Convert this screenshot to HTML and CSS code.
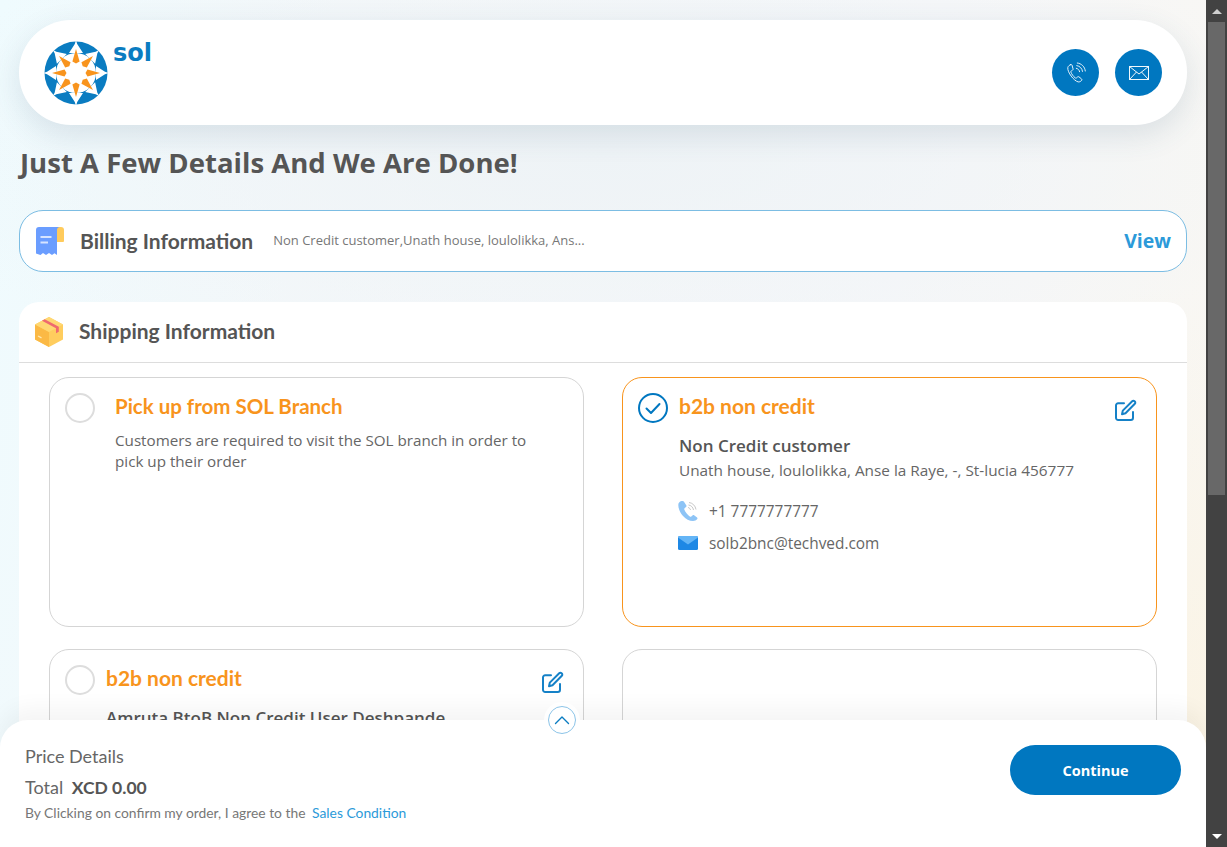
FILE: index.html
```html
<!DOCTYPE html>
<html lang="en">
<head>
<meta charset="utf-8">
<title>Checkout</title>
<link rel="stylesheet" href="styles.css">
</head>
<body>
<svg class="defs" width="0" height="0" aria-hidden="true">
  <symbol id="edit" viewBox="0 0 24 24">
    <path d="M11 4.2H5.2A2.2 2.2 0 0 0 3 6.4v12.4A2.2 2.2 0 0 0 5.2 21h12.6a2.2 2.2 0 0 0 2.2-2.2V13" fill="none" stroke="currentColor" stroke-width="2" stroke-linecap="round"/>
    <path d="M9 15.2l.8-3.6L19.2 2.2a1.6 1.6 0 0 1 2.3 0l.3.3a1.6 1.6 0 0 1 0 2.3L12.5 14.3z" fill="none" stroke="currentColor" stroke-width="2" stroke-linejoin="round"/>
  </symbol>
</svg>
<div class="page">
  <div class="content">
    <header class="topbar">
      <div class="brand">
        <svg class="logo" viewBox="-32 -32 64 64" aria-hidden="true">
          <defs>
            <polygon id="ray" points="0,-33 1.200,-29 7,-20 -7,-20 -1.200,-29" fill="#fff"/>
            <polygon id="dart" points="0,-24 3.600,-11.500 0,-9.500 -3.600,-11.500" fill="#f8941d"/>
            <polygon id="dartd" points="0,-24 3.800,-11.500 0,-9.500 -3.800,-11.500" fill="#f8941d"/>
          </defs>
          <circle r="31.500" fill="#0a7cc1"/>
          <circle r="20" fill="#fff"/>
          <use href="#ray"/><use href="#ray" transform="rotate(45)"/><use href="#ray" transform="rotate(90)"/><use href="#ray" transform="rotate(135)"/><use href="#ray" transform="rotate(180)"/><use href="#ray" transform="rotate(225)"/><use href="#ray" transform="rotate(270)"/><use href="#ray" transform="rotate(315)"/>
          <use href="#dart"/><use href="#dartd" transform="rotate(45)"/><use href="#dart" transform="rotate(90)"/><use href="#dartd" transform="rotate(135)"/><use href="#dart" transform="rotate(180)"/><use href="#dartd" transform="rotate(225)"/><use href="#dart" transform="rotate(270)"/><use href="#dartd" transform="rotate(315)"/>
        </svg>
        <span class="brand-name">sol</span>
      </div>
      <div class="actions">
        <a class="round-btn">
          <svg viewBox="0 0 24 24" width="24" height="24" fill="none" stroke="#e4f1fa" stroke-width="1" stroke-linecap="round" aria-hidden="true">
            <path d="M6.6 3.6c-1 .4-2.6 1.6-2.8 3-.3 2.400 1.300 5.700 3.400 8.500 2.100 2.800 4.700 5.300 7 5.800 1.300.3 2.900-.700 3.500-1.600.3-.5.200-1-.200-1.400l-2.500-2c-.5-.4-1-.300-1.500.100l-1 .9c-.4.300-.9.300-1.300 0-1.800-1.500-3.500-3.700-4.300-5.800-.2-.5 0-.9.400-1.200l1.200-.7c.5-.3.700-.8.500-1.400L8 4.100c-.2-.5-.8-.8-1.400-.5z"/>
            <path d="M12.300 7.300c1.700.3 3 1.700 3.300 3.400M12.800 4.600c3.100.4 5.300 2.800 5.700 5.800M13.300 2c4.300.5 7.500 3.700 8 8"/>
          </svg>
        </a>
        <a class="round-btn">
          <svg viewBox="0 0 20 14" width="20" height="14" fill="none" stroke="#f1f8fc" stroke-width="1" aria-hidden="true">
            <rect x=".5" y=".5" width="19" height="13"/>
            <path d="M.5.500l9.500 7.500 9.500-7.500M.5 13.500l7-7.500M19.500 13.500l-7-7.500"/>
          </svg>
        </a>
      </div>
    </header>

    <h1 class="page-title">Just A Few Details And We Are Done!</h1>

    <section class="billing">
      <svg class="billing-icon" viewBox="0 0 28 28" aria-hidden="true">
        <path d="M21 0h4a3 3 0 0 1 3 3v11a1 1 0 0 1-1 1h-6z" fill="#ffcb5c"/>
        <path d="M3 0h21c-1.600 0-3 1.300-3 3v25l-2.500-1.700-2.500 1.700-3-1.900-3 1.900-3-1.900-2.500 1.900L0 26.500V3a3 3 0 0 1 3-3z" fill="#6a9dff"/>
        <path d="M4.500 10h11M4.500 15.500h7.500" stroke="#d6e4ff" stroke-width="2"/>
      </svg>
      <h2 class="billing-title">Billing Information</h2>
      <p class="billing-summary">Non Credit customer,Unath house, loulolikka, Ans...</p>
      <a class="view-link">View</a>
    </section>

    <section class="shipping">
      <div class="shipping-head">
        <svg class="box-icon" viewBox="0 0 30 30" aria-hidden="true">
          <path d="M15 0l14 7.500v15L15 30 1 22.500v-15z" fill="#ffcd5e"/>
          <path d="M15 15v15L1 22.500v-15z" fill="#fbb945"/>
          <path d="M15 0l14 7.500L15 15 1 7.500z" fill="#ffd873"/>
          <path d="M8 3.800l14 7.400v5l2.800-1.500v-5L10.700 2.300z" fill="#ef6a6f"/>
          <path d="M4 19l3.500 1.900" stroke="#ffe9b0" stroke-width="1.200"/>
        </svg>
        <h2 class="shipping-title">Shipping Information</h2>
      </div>
      <div class="address-grid">
        <article class="address">
          <span class="radio radio-branch"></span>
          <div class="address-body address-body-branch">
            <h3 class="address-name">Pick up from SOL Branch</h3>
            <p class="address-note">Customers are required to visit the SOL branch in order to pick up their order</p>
          </div>
        </article>
        <article class="address address-selected">
          <svg class="radio-check" viewBox="0 0 30 30" aria-hidden="true">
            <circle cx="15" cy="15" r="14" fill="none" stroke="#0077c0" stroke-width="2"/>
            <path d="M8.500 15.500l4.500 4.500 8.500-9" fill="none" stroke="#0077c0" stroke-width="2" stroke-linecap="round" stroke-linejoin="round"/>
          </svg>
          <div class="address-body">
            <h3 class="address-name address-name-saved">b2b non credit</h3>
            <p class="person">Non Credit customer</p>
            <p class="street">Unath house, loulolikka, Anse la Raye, -, St-lucia 456777</p>
            <p class="contact contact-phone">
              <svg class="contact-icon" viewBox="0 0 20 20" aria-hidden="true">
                <path d="M3.500 0C1.500.5.300 2 .3 4c0 3.500 1.700 7.500 4.500 10.700C7.700 18 11.500 20 15 20c1.800 0 3.500-.7 4.300-2 .3-.5.200-1-.2-1.400l-3-2.300c-.5-.4-1.100-.300-1.600.100l-1.200 1c-.5.400-1 .400-1.500 0-2.400-1.800-4.500-4.500-5.500-7-.2-.6 0-1 .5-1.400l1.200-.9c.5-.4.700-1 .400-1.600L6 .8C5.600.100 4.500-.2 3.500 0z" fill="#8dc4f6"/>
                <path d="M10 6.500c1.300.2 2.300 1.200 2.500 2.500M10.500 4c2.600.3 4.600 2.300 5 5M11 1.500c3.600.4 6.400 3.300 7 7" fill="none" stroke="#b9b9b9" stroke-width=".8"/>
              </svg>
              +1 7777777777
            </p>
            <p class="contact">
              <svg class="contact-icon" viewBox="0 0 20 14" aria-hidden="true">
                <rect width="20" height="14" rx="1.500" fill="#1e88e5"/>
                <path d="M0 1.500A1.500 1.500 0 0 1 1.500 0h17A1.500 1.500 0 0 1 20 1.500L10 8.500z" fill="#64b5f6"/>
              </svg>
              solb2bnc@techved.com
            </p>
          </div>
          <svg class="edit-icon" aria-hidden="true"><use href="#edit"/></svg>
        </article>
        <article class="address">
          <span class="radio"></span>
          <div class="address-body">
            <h3 class="address-name address-name-saved">b2b non credit</h3>
            <p class="person">Amruta BtoB Non Credit User Deshpande</p>
          </div>
          <svg class="edit-icon" aria-hidden="true"><use href="#edit"/></svg>
        </article>
        <article class="address"></article>
      </div>
    </section>
  </div>

  <footer class="pricebar">
    <button class="collapse" aria-label="Collapse">
      <svg viewBox="0 0 16 10" width="16" height="10" fill="none" stroke="#0a7cc1" stroke-width="1.400" stroke-linecap="round" stroke-linejoin="round" aria-hidden="true"><path d="M1.500 8.500L8 2l6.500 6.500"/></svg>
    </button>
    <div class="price-info">
      <p class="price-label">Price Details</p>
      <p class="price-total">Total <strong>XCD 0.00</strong></p>
      <p class="price-terms">By Clicking on confirm my order, I agree to the <a class="terms-link">Sales Condition</a></p>
    </div>
    <button class="continue">Continue</button>
  </footer>
</div>

<div class="scrollbar" aria-hidden="true">
  <span class="arrow arrow-up"></span>
  <div class="track"><div class="thumb"></div></div>
  <span class="arrow arrow-down"></span>
</div>
</body>
</html>
```
FILE: styles.css
```css
* { box-sizing: border-box; }
html, body { margin: 0; height: 100%; }
body {
  display: flex;
  height: 847px;
  overflow: hidden;
  font-family: "Open Sans", "Liberation Sans", sans-serif;
  color: #555;
  background: #fff;
}
h1, h2, h3, p { margin: 0; }
.defs { position: absolute; }

.page {
  position: relative;
  flex: 1;
  min-width: 0;
  overflow: hidden;
  background:
    radial-gradient(circle at 100% 100%, #fbf3e2 0, rgba(251,243,226,0) 38%),
    radial-gradient(ellipse 60% 30% at 50% 18%, #eef3f6 0, rgba(238,243,246,0) 100%),
    linear-gradient(100deg, #effbfe 0, #f4f8fa 25%, #f6f7f9 70%, #f9f7f2 100%);
}
.content { padding: 20px 19px 0; }

.topbar {
  display: flex;
  justify-content: space-between;
  height: 105px;
  padding: 21px 25px 0 25px;
  background: #fff;
  border-radius: 52px;
  box-shadow: 0 10px 30px rgba(60, 90, 120, .14);
}
.brand { display: flex; align-items: flex-start; gap: 5px; }
.logo { width: 64px; height: 64px; }
.brand-name {
  font-family: "DejaVu Sans", sans-serif;
  font-size: 24px;
  font-weight: 700;
  line-height: 24px;
  color: #0a7cc1;
}
.actions { display: flex; gap: 16px; padding-top: 8px; }
.round-btn {
  display: flex;
  align-items: center;
  justify-content: center;
  width: 47px;
  height: 47px;
  border-radius: 50%;
  background: #0077c0;
}

.page-title {
  margin: 19px 0 28px 1px;
  font-size: 27.550px;
  line-height: 38px;
  font-weight: 700;
  color: #555;
}

.billing {
  display: flex;
  align-items: center;
  height: 62px;
  padding: 0 15px 2px 16px;
  background: #fff;
  border: 1px solid #7cbde3;
  border-radius: 24px;
}
.billing-icon { width: 28px; height: 28px; margin: 2px 16px 0 0; }
.billing-title {
  font-family: Lato, sans-serif;
  font-size: 21px;
  font-weight: 700;
  color: #555;
}
.billing-summary { margin-left: 20px; flex: 1; font-size: 13px; color: #777; }
.view-link { font-size: 19.500px; font-weight: 700; color: #2c9ad9; }

.shipping {
  margin-top: 30px;
  background: #fff;
  border-radius: 20px 20px 0 0;
}
.shipping-head {
  display: flex;
  align-items: center;
  height: 61px;
  padding-left: 15px;
  border-bottom: 1px solid #ddd;
}
.box-icon { width: 30px; height: 30px; margin-right: 15px; }
.shipping-title {
  font-family: Lato, sans-serif;
  font-size: 21px;
  line-height: 28px;
  margin-bottom: 2px;
  font-weight: 700;
  color: #555;
}

.address-grid {
  display: grid;
  grid-template-columns: 535px 535px;
  grid-auto-rows: 250px;
  gap: 22px 38px;
  padding: 14px 30px 0;
}
.address {
  position: relative;
  display: flex;
  align-items: flex-start;
  gap: 11px;
  padding: 14px 15px;
  border: 1px solid #d5d5d5;
  border-radius: 20px;
}
.address-selected { border-color: #f8941d; }
.radio {
  flex: none;
  width: 30px;
  height: 30px;
  margin-top: 1px;
  border: 2px solid #ddd;
  border-radius: 50%;
}
.radio-branch { margin-right: 9px; }
.radio-check { flex: none; width: 30px; height: 30px; margin-top: 1px; }
.address-body { flex: 1; min-width: 0; }
.address-name {
  font-family: Lato, sans-serif;
  font-size: 20.500px;
  line-height: 28px;
  font-weight: 700;
  color: #f8941d;
}
.address-name-saved { font-size: 21px; }
.address-note { margin-top: 10px; max-width: 430px; font-size: 15.200px; line-height: 21px; color: #666; }
.person { margin-top: 14px; font-size: 17px; line-height: 24px; font-weight: 600; color: #555; }
.street { margin-bottom: 13px; font-size: 15.350px; line-height: 24px; color: #666; }
.contact {
  display: flex;
  align-items: center;
  gap: 11px;
  height: 32px;
  font-size: 15.400px;
  color: #666;
}
.contact-icon { width: 20px; height: 20px; margin-left: -1px; }
.edit-icon {
  position: absolute;
  top: 21px;
  right: 19px;
  width: 24px;
  height: 24px;
  color: #1581c7;
}

.pricebar {
  position: absolute;
  left: 0;
  right: 0;
  bottom: 0;
  display: flex;
  justify-content: space-between;
  height: 127px;
  padding: 25px 25px 0;
  background: #fff;
  border-radius: 28px 28px 0 0;
  box-shadow: 0 -12px 22px rgba(0, 0, 0, .045);
}
.collapse {
  position: absolute;
  top: -14px;
  left: 548px;
  display: flex;
  align-items: center;
  justify-content: center;
  width: 28px;
  height: 28px;
  padding: 0;
  background: #fff;
  border: 1px solid #8cc4e8;
  border-radius: 50%;
  box-shadow: 0 0 0 4px rgba(255, 255, 255, .8);
}
.price-info { margin-top: -2px; }
.price-label {
  font-family: Lato, sans-serif;
  font-size: 18px;
  line-height: 26px;
  color: #666;
}
.price-total {
  margin-top: 5px;
  font-family: Lato, sans-serif;
  font-size: 18px;
  line-height: 26px;
  color: #666;
}
.price-total strong { margin-left: 4px; font-size: 17.500px; font-weight: 700; color: #555; }
.price-terms {
  margin-top: 2px;
  font-family: Lato, sans-serif;
  font-size: 13.850px;
  line-height: 20px;
  color: #777;
}
.terms-link { margin-left: 3px; color: #2c9ad9; }
.continue {
  width: 171px;
  height: 50px;
  font-family: "Open Sans", sans-serif;
  font-size: 14.500px;
  font-weight: 700;
  color: #fff;
  background: #0077c0;
  border: 0;
  border-radius: 25px;
}

.scrollbar {
  flex: none;
  display: flex;
  flex-direction: column;
  width: 21px;
  background: #424242;
}
.arrow {
  flex: none;
  display: flex;
  align-items: center;
  justify-content: center;
  height: 22px;
}
.arrow::before {
  content: "";
  border-left: 5px solid transparent;
  border-right: 5px solid transparent;
}
.arrow-up::before { border-bottom: 5px solid #cfcfcf; }
.arrow-down::before { border-top: 5px solid #fff; }
.track { flex: 1; padding: 0 2px; }
.thumb { width: 17px; height: 473px; background: #686868; }
```
